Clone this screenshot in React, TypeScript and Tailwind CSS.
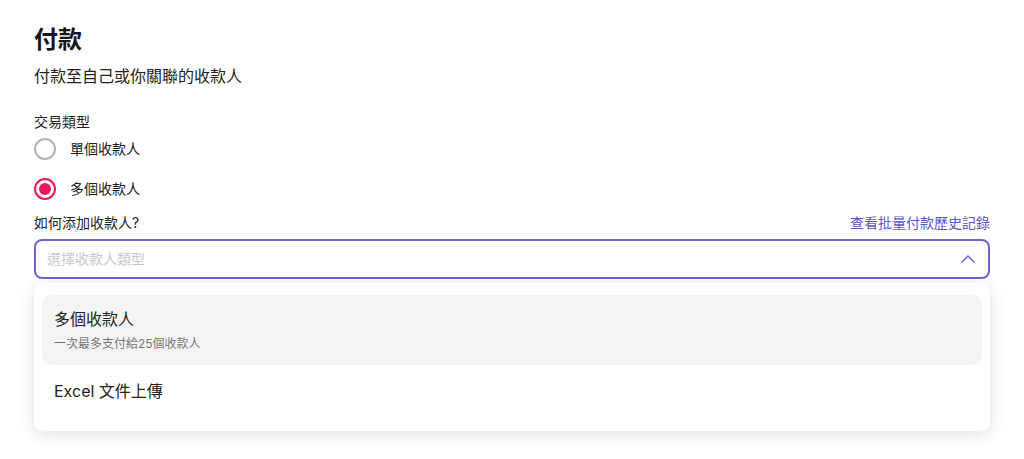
import { ChevronUp } from "lucide-react"

const font = { fontFamily: 'Inter, "Noto Sans CJK TC", sans-serif' }

function Radio({ checked, label }: { checked?: boolean; label: string }) {
  return (
    <label className="flex h-6 items-center gap-[14px] text-sm text-[#222]">
      {checked ? (
        <span className="flex h-[22px] w-[22px] items-center justify-center rounded-full border-2 border-[#ee1655]">
          <span className="h-3 w-3 rounded-full bg-[#ee1655]" />
        </span>
      ) : (
        <span className="h-[22px] w-[22px] rounded-full border-2 border-[#b4b4b4]" />
      )}
      <span>{label}</span>
    </label>
  )
}

export default function App() {
  return (
    <div className="min-h-[459px] bg-white px-[34px] pt-6 text-[#1d1d1d]" style={font}>
      <h1 className="text-2xl leading-8 font-bold text-[#161616]">付款</h1>
      <p className="mt-2 text-base leading-6 text-[#222]">付款至自己或你關聯的收款人</p>

      <div className="mt-[24px] text-sm leading-5 text-[#222]">交易類型</div>
      <div className="mt-[5px] flex flex-col gap-4">
        <Radio label="單個收款人" />
        <Radio checked label="多個收款人" />
      </div>

      <div className="mt-3 flex items-center justify-between text-sm leading-5">
        <span className="text-[#222]">如何添加收款人?</span>
        <a href="#" className="text-[#5b56c6]">查看批量付款歷史記錄</a>
      </div>

      {/* select + open dropdown */}
      <div className="relative mt-[6px]">
        <button
          type="button"
          className="flex h-10 w-full items-center justify-between rounded-lg border-2 border-[#6a65d1] bg-white pr-2 pl-[11px] text-sm"
        >
          <span className="text-[#c9c9c9]">選擇收款人類型</span>
          <ChevronUp size={24} strokeWidth={1.6} className="text-[#6a65d1]" />
        </button>

        <div className="mt-1 rounded-lg bg-white px-2 pt-3 pb-[14px] shadow-[0_4px_18px_rgba(0,0,0,0.12)]">
          <div className="rounded-[10px] bg-[#f4f4f4] px-3 pt-3 pb-[13px]">
            <div className="text-base leading-6 text-[#222]">多個收款人</div>
            <div className="mt-[5px] text-xs leading-4 text-[#777]">一次最多支付給25個收款人</div>
          </div>
          <div className="px-3 py-[14px] text-base leading-6 text-[#222]">Excel 文件上傳</div>
        </div>
      </div>
    </div>
  )
}
